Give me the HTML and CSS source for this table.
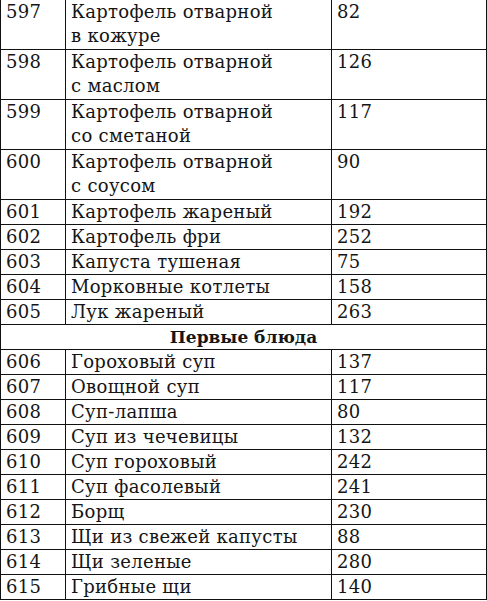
FILE: index.html
```html
<!DOCTYPE html>
<html lang="ru">
<head>
<meta charset="utf-8">
<link rel="stylesheet" href="styles.css">
</head>
<body>
<table class="menu">
  <colgroup>
    <col class="c-num">
    <col class="c-name">
    <col class="c-val">
  </colgroup>
  <tbody>
    <tr class="r2"><td>597</td><td>Картофель отварной<br>в кожуре</td><td>82</td></tr>
    <tr class="r2"><td>598</td><td>Картофель отварной<br>с маслом</td><td>126</td></tr>
    <tr class="r2"><td>599</td><td>Картофель отварной<br>со сметаной</td><td>117</td></tr>
    <tr class="r2"><td>600</td><td>Картофель отварной<br>с соусом</td><td>90</td></tr>
    <tr class="r1"><td>601</td><td>Картофель жареный</td><td>192</td></tr>
    <tr class="r1"><td>602</td><td>Картофель фри</td><td>252</td></tr>
    <tr class="r1"><td>603</td><td>Капуста тушеная</td><td>75</td></tr>
    <tr class="r1"><td>604</td><td>Морковные котлеты</td><td>158</td></tr>
    <tr class="r1"><td>605</td><td>Лук жареный</td><td>263</td></tr>
    <tr class="r1 section"><td colspan="3">Первые блюда</td></tr>
    <tr class="r1"><td>606</td><td>Гороховый суп</td><td>137</td></tr>
    <tr class="r1"><td>607</td><td>Овощной суп</td><td>117</td></tr>
    <tr class="r1"><td>608</td><td>Суп-лапша</td><td>80</td></tr>
    <tr class="r1"><td>609</td><td>Суп из чечевицы</td><td>132</td></tr>
    <tr class="r1"><td>610</td><td>Суп гороховый</td><td>242</td></tr>
    <tr class="r1"><td>611</td><td>Суп фасолевый</td><td>241</td></tr>
    <tr class="r1"><td>612</td><td>Борщ</td><td>230</td></tr>
    <tr class="r1"><td>613</td><td>Щи из свежей капусты</td><td>88</td></tr>
    <tr class="r1"><td>614</td><td>Щи зеленые</td><td>280</td></tr>
    <tr class="r1"><td>615</td><td>Грибные щи</td><td>140</td></tr>
  </tbody>
</table>
</body>
</html>
```

FILE: styles.css
```css
html, body {
  margin: 0;
  padding: 0;
  background: #ffffff;
}

.menu {
  border-collapse: collapse;
  table-layout: fixed;
  width: 486px;
  font-family: "DejaVu Serif", "Liberation Serif", serif;
  font-size: 18px;
  letter-spacing: 0.3px;
  line-height: 24px;
  color: #151515;
}

.c-num { width: 65px; }
.c-name { width: 266px; }
.c-val { width: 155px; }

.menu td {
  border: 1px solid #111111;
  padding: 0 5px;
  vertical-align: top;
  white-space: nowrap;
}

.menu tr:first-child td {
  border-top: none;
}

.r1 td { height: 24px; }
.r2 td { height: 49px; }

.section td {
  text-align: center;
  font-weight: bold;
  font-size: 17px;
  letter-spacing: 0;
}
```
